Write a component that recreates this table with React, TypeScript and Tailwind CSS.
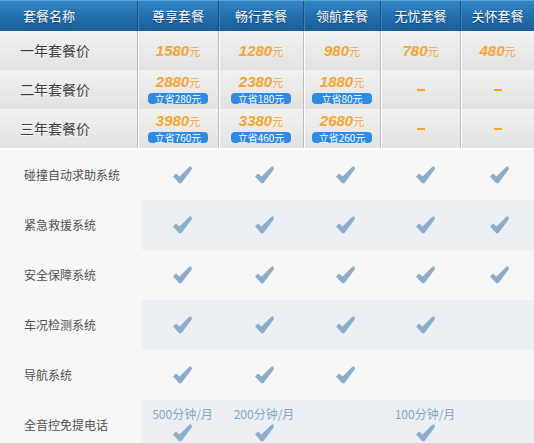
const cn = { fontFamily: '"Microsoft YaHei", "Noto Sans CJK SC", sans-serif' };
const num = { fontFamily: '"Liberation Sans", Arial, sans-serif' };

const plans = ['尊享套餐', '畅行套餐', '领航套餐', '无忧套餐', '关怀套餐'];

type Price = { price: string; save?: string } | null;

const priceRows: { label: string; cells: Price[] }[] = [
  {
    label: '一年套餐价',
    cells: [{ price: '1580' }, { price: '1280' }, { price: '980' }, { price: '780' }, { price: '480' }],
  },
  {
    label: '二年套餐价',
    cells: [
      { price: '2880', save: '280' },
      { price: '2380', save: '180' },
      { price: '1880', save: '80' },
      null,
      null,
    ],
  },
  {
    label: '三年套餐价',
    cells: [
      { price: '3980', save: '760' },
      { price: '3380', save: '460' },
      { price: '2680', save: '260' },
      null,
      null,
    ],
  },
];

// true = check, string = text above the check, false = empty
const features: { label: string; cells: (boolean | string)[] }[] = [
  { label: '碰撞自动求助系统', cells: [true, true, true, true, true] },
  { label: '紧急救援系统', cells: [true, true, true, true, true] },
  { label: '安全保障系统', cells: [true, true, true, true, true] },
  { label: '车况检测系统', cells: [true, true, true, true, false] },
  { label: '导航系统', cells: [true, true, true, false, false] },
  { label: '全音控免提电话', cells: ['500分钟/月', '200分钟/月', false, '100分钟/月', false] },
];

function Check() {
  return (
    <svg width="19" height="18" viewBox="0 0 19 18">
      <path d="M0 10.5 L3 7.5 L6.5 10.5 L15.5 1.5 L18 0 L19 3 L8.5 17 L6.5 17.5 Z" fill="#8badcb" />
    </svg>
  );
}

const sep = 'border-l border-[#bcbcbc] shadow-[inset_1px_0_0_#ffffff]';

export default function App() {
  return (
    <div className="w-[534px] h-[443px] overflow-hidden bg-[#f7f7f7]" style={cn}>
      {/* header */}
      <div className="grid grid-cols-[137px_81px_85px_77px_80px_74px] h-[31px] bg-gradient-to-b from-[#3385c4] via-[#236fae] to-[#1b5e98] border-t border-[#5c9fd4]">
        <div className="flex items-center pl-[23px] text-[13px] text-white [text-shadow:0_1px_1px_#0d3c66]">
          套餐名称
        </div>
        {plans.map((p) => (
          <div
            key={p}
            className="flex items-center justify-center text-[13px] text-white [text-shadow:0_1px_1px_#0d3c66] border-l border-[#1a4f7e] shadow-[inset_1px_0_0_#3a86c2]"
          >
            {p}
          </div>
        ))}
      </div>

      {/* prices */}
      {priceRows.map((row, i) => (
        <div
          key={row.label}
          className={`grid grid-cols-[137px_81px_85px_77px_80px_74px] ${i === 0 ? 'h-[39px]' : 'h-[39px]'} bg-gradient-to-b from-[#f3f2f2] to-[#e2e2e2]`}
        >
          <div className="flex items-center pl-[20px] text-[14px] text-[#3d3d3d] [text-shadow:0_1px_0_#ffffff]">
            {row.label}
          </div>
          {row.cells.map((c, j) => (
            <div key={j} className={`flex flex-col items-center justify-center ${sep}`}>
              {c ? (
                <>
                  <div className="flex items-baseline leading-[14px] text-[#f6a530]">
                    <span className="text-[15px] font-bold italic" style={num}>
                      {c.price}
                    </span>
                    <span className="text-[11px]">元</span>
                  </div>
                  {c.save && (
                    <div className="mt-[4px] w-[60px] h-[11px] rounded-[4px] bg-[#2f8ae3] text-white text-[10px] leading-[11px] text-center">
                      立省{c.save}元
                    </div>
                  )}
                </>
              ) : (
                <div className="w-[8px] h-[2px] bg-[#f6a530]" />
              )}
            </div>
          ))}
        </div>
      ))}

      <div className="h-[2px] bg-white" />

      {/* features */}
      {features.map((f, i) => (
        <div key={f.label} className="grid grid-cols-[142px_81px_82px_81px_78px_70px] h-[50px]">
          <div className="flex items-center pl-[24px] text-[12px] text-[#505050]">{f.label}</div>
          {f.cells.map((c, j) => (
            <div
              key={j}
              className={`flex flex-col items-center justify-center ${i % 2 === 1 ? 'bg-[#ecf0f4]' : ''}`}
            >
              {typeof c === 'string' ? (
                <div className="flex flex-col items-center -mt-[2px]">
                  <span className="text-[12px] leading-[16px] text-[#7fa6c8]">{c}</span>
                  <div className="mt-[2px]">
                    <Check />
                  </div>
                </div>
              ) : c ? (
                <Check />
              ) : null}
            </div>
          ))}
        </div>
      ))}
    </div>
  );
}
